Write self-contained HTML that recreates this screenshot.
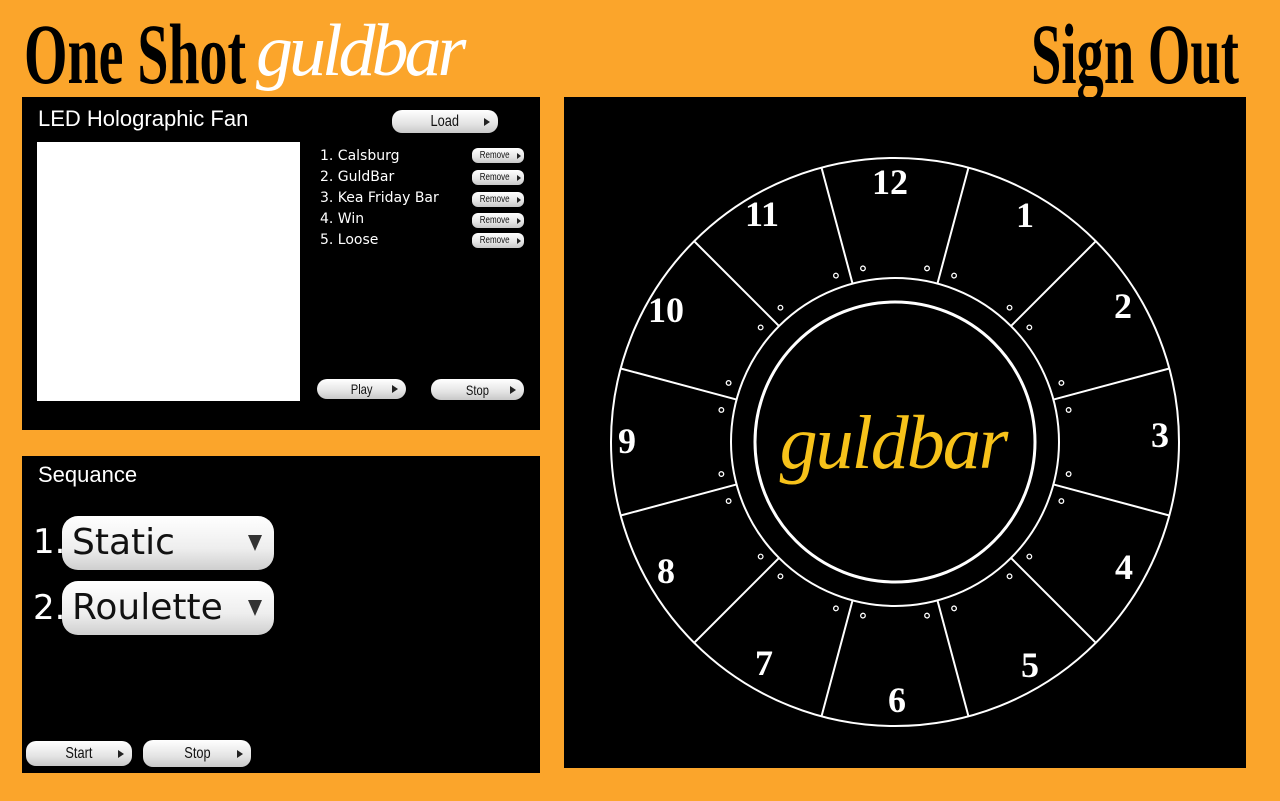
<!DOCTYPE html>
<html><head><meta charset="utf-8"><style>
*{margin:0;padding:0;box-sizing:border-box}
body{width:1280px;height:801px;background:#FBA52B;position:relative;overflow:hidden;font-family:"DejaVu Sans","Liberation Sans",sans-serif}
.abs{position:absolute}
.panel{position:absolute;background:#000}
.big{font-family:"Liberation Serif",serif;font-weight:bold;color:#000;font-size:86px;line-height:1;transform-origin:left top;transform:scaleX(0.65);white-space:nowrap}
.btn{position:absolute;border-radius:10px;background:linear-gradient(#fff,#e4e4e4 60%,#c8c8c8);color:#111;font-family:"Liberation Sans",sans-serif;display:flex;align-items:center;justify-content:center}
.btn .t{transform:scaleX(0.8)}
.btn i{position:absolute;right:8px;top:50%;width:0;height:0;border-left:6px solid #222;border-top:4px solid transparent;border-bottom:4px solid transparent;margin-top:-4px}
.rm{font-size:10px;border-radius:6px}
.rm i{right:3px;border-left-width:4px;border-top-width:3px;border-bottom-width:3px;margin-top:-3px}
.li{position:absolute;left:320px;color:#fff;font-size:14px}
.dd{position:absolute;left:62px;width:212px;height:54px;border-radius:16px;background:linear-gradient(#fff,#eee 60%,#cfcfcf);font-size:36px;color:#111;padding-left:10px;line-height:54px}
.dd i{position:absolute;right:12px;top:19px;border-top:16px solid #333;border-left:7px solid transparent;border-right:7px solid transparent}
.num{position:absolute;left:33px;color:#fff;font-size:34px}
</style></head><body>
<div class="abs big" style="left:24px;top:11px">One Shot</div>
<div class="abs big" style="left:1031px;top:11px;transform:scaleX(0.635)">Sign Out</div>

<div class="panel" style="left:22px;top:97px;width:518px;height:333px"></div>
<div class="abs" style="left:256px;top:14px;font-family:'Liberation Serif',serif;font-style:italic;font-size:74px;color:#fff;letter-spacing:-4px;line-height:1">guldbar</div>
<div class="abs" style="left:38px;top:106px;color:#fff;font-size:22px;font-family:'Liberation Sans',sans-serif">LED Holographic Fan</div>
<div class="btn" style="left:392px;top:110px;width:106px;height:23px;font-size:16px"><span class="t">Load</span><i></i></div>
<div class="abs" style="left:37px;top:142px;width:263px;height:259px;background:#fff"></div>
<div class="li" style="top:148px">1. Calsburg</div>
<div class="li" style="top:169px">2. GuldBar</div>
<div class="li" style="top:190px">3. Kea Friday Bar</div>
<div class="li" style="top:211px">4. Win</div>
<div class="li" style="top:232px">5. Loose</div>
<div class="btn rm" style="left:472px;top:148px;width:52px;height:15px"><span class="t" style="margin-right:6px">Remove</span><i></i></div>
<div class="btn rm" style="left:472px;top:170px;width:52px;height:15px"><span class="t" style="margin-right:6px">Remove</span><i></i></div>
<div class="btn rm" style="left:472px;top:192px;width:52px;height:15px"><span class="t" style="margin-right:6px">Remove</span><i></i></div>
<div class="btn rm" style="left:472px;top:213px;width:52px;height:15px"><span class="t" style="margin-right:6px">Remove</span><i></i></div>
<div class="btn rm" style="left:472px;top:233px;width:52px;height:15px"><span class="t" style="margin-right:6px">Remove</span><i></i></div>
<div class="btn" style="left:317px;top:379px;width:89px;height:20px;font-size:14px"><span class="t">Play</span><i></i></div>
<div class="btn" style="left:431px;top:379px;width:93px;height:21px;font-size:14px"><span class="t">Stop</span><i></i></div>

<div class="panel" style="left:22px;top:456px;width:518px;height:317px"></div>
<div class="abs" style="left:38px;top:462px;color:#fff;font-size:22px;font-family:'Liberation Sans',sans-serif">Sequance</div>
<div class="num" style="top:522px">1.</div>
<div class="dd" style="top:516px">Static<i></i></div>
<div class="num" style="top:588px">2.</div>
<div class="dd" style="top:581px">Roulette<i></i></div>
<div class="btn" style="left:26px;top:741px;width:106px;height:25px;font-size:16px"><span class="t">Start</span><i></i></div>
<div class="btn" style="left:143px;top:740px;width:108px;height:27px;font-size:16px"><span class="t">Stop</span><i></i></div>

<div class="panel" style="left:564px;top:97px;width:682px;height:671px"></div>
<svg class="abs" style="left:0;top:0" width="1280" height="801">
<defs>
<g id="d" stroke="#fff" fill="none"><line x1="895" y1="278" x2="895" y2="158" stroke-width="2"/><circle cx="881" cy="266" r="2.3" stroke-width="1.3"/><circle cx="909" cy="266" r="2.3" stroke-width="1.3"/></g>
</defs>
<g fill="none" stroke="#fff" stroke-width="2">
<circle cx="895" cy="442" r="284"/>
<circle cx="895" cy="442" r="164"/>
<circle cx="895" cy="442" r="140" stroke-width="3"/>
</g>
<use href="#d" transform="rotate(15 895 442)"/>
<use href="#d" transform="rotate(45 895 442)"/>
<use href="#d" transform="rotate(75 895 442)"/>
<use href="#d" transform="rotate(105 895 442)"/>
<use href="#d" transform="rotate(135 895 442)"/>
<use href="#d" transform="rotate(165 895 442)"/>
<use href="#d" transform="rotate(195 895 442)"/>
<use href="#d" transform="rotate(225 895 442)"/>
<use href="#d" transform="rotate(255 895 442)"/>
<use href="#d" transform="rotate(285 895 442)"/>
<use href="#d" transform="rotate(315 895 442)"/>
<use href="#d" transform="rotate(345 895 442)"/>
<g fill="#fff" font-family="Liberation Serif,serif" font-weight="bold" font-size="36" text-anchor="middle" dominant-baseline="central">
<text x="890" y="182">12</text>
<text x="1025" y="215">1</text>
<text x="1123" y="306">2</text>
<text x="1160" y="435">3</text>
<text x="1124" y="567">4</text>
<text x="1030" y="665">5</text>
<text x="897" y="700">6</text>
<text x="764" y="663">7</text>
<text x="666" y="571">8</text>
<text x="627" y="441">9</text>
<text x="666" y="310">10</text>
<text x="762" y="214">11</text>
</g>
<text x="893" y="468" fill="#F7C21A" font-family="Liberation Serif,serif" font-style="italic" font-size="76" letter-spacing="-2" text-anchor="middle">guldbar</text>
</svg>
</body></html>
